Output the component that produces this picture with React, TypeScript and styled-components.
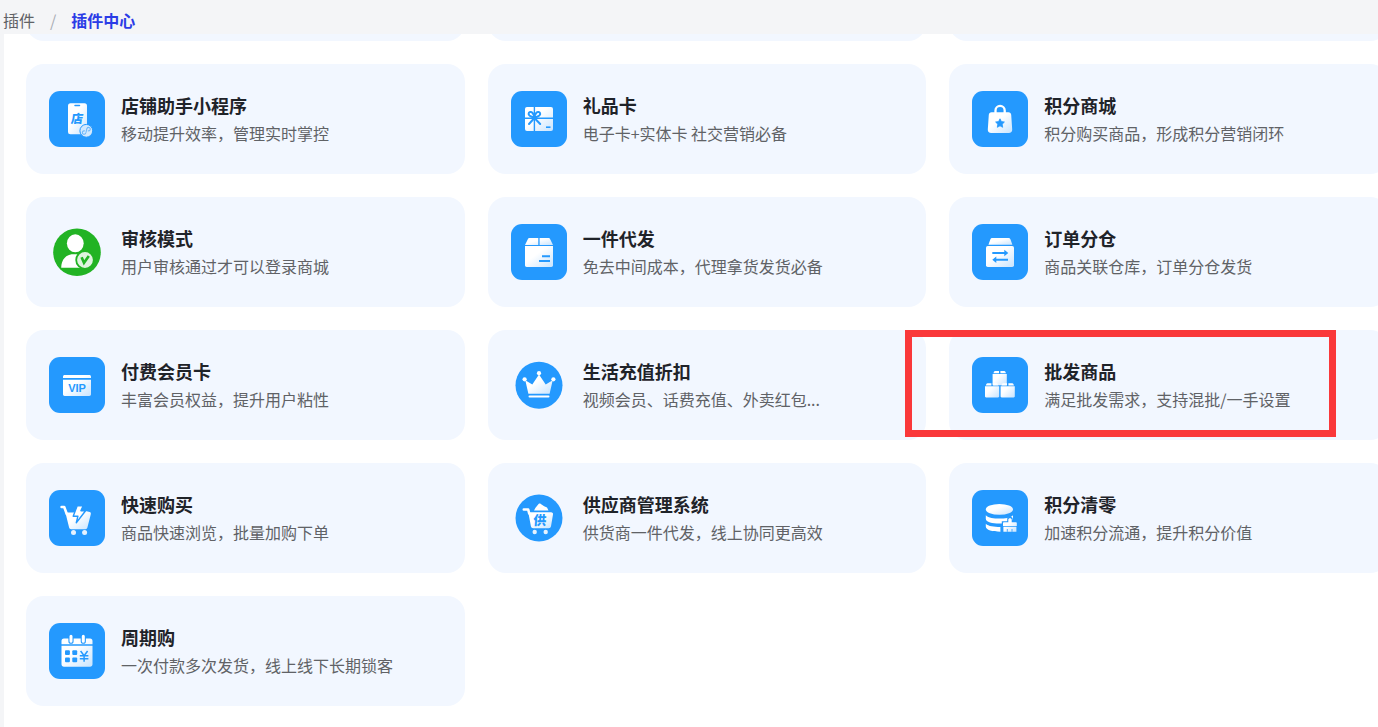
import React from 'react';
import styled, { createGlobalStyle } from 'styled-components';

const GlobalStyle = createGlobalStyle`
  * { box-sizing: border-box; }
  body {
    margin: 0;
    background: #f4f5f7;
    font-family: "Noto Sans CJK SC", "Liberation Sans", sans-serif;
    overflow: hidden;
  }
`;

const BLUE = '#2499fe';

const Page = styled.div`
  display: flex;
  flex-direction: column;
  min-height: 100vh;
  overflow: hidden;
`;

const Breadcrumb = styled.nav`
  display: flex;
  align-items: center;
  gap: 15px;
  height: 34px;
  padding: 6px 3px 0;
  font-size: 16px;
  line-height: 24px;
`;

const Crumb = styled.a<{ $current?: boolean }>`
  color: ${(p) => (p.$current ? '#2b3ce6' : '#606266')};
  font-weight: ${(p) => (p.$current ? 700 : 400)};
  text-decoration: none;
`;

const Separator = styled.span`
  color: #a9adb5;
`;

const Panel = styled.main`
  flex: 1;
  margin-left: 4px;
  padding: 0 0 21px 22px;
  background: #fff;
  overflow: hidden;
`;

const CardGrid = styled.ul`
  display: grid;
  grid-template-columns: repeat(3, 1fr);
  grid-auto-rows: 110px;
  gap: 23px;
  margin: -103px -10px 0 0;
  padding: 0;
  list-style: none;
`;

const Cell = styled.li`
  position: relative;
  display: flex;
`;

const Card = styled.a`
  flex: 1;
  display: flex;
  align-items: center;
  gap: 16px;
  padding: 0 23px;
  border-radius: 18px;
  background: #f2f7ff;
  text-decoration: none;
`;

const Tile = styled.svg`
  flex: none;
  width: 56px;
  height: 56px;
`;

const Copy = styled.div`
  min-width: 0;
  padding-bottom: 1px;
`;

const Title = styled.h3`
  margin: 0;
  color: #1f2329;
  font-size: 18px;
  font-weight: 700;
  line-height: 28px;
`;

const Description = styled.p`
  margin: 0;
  color: #606266;
  font-size: 16px;
  line-height: 28px;
  white-space: nowrap;
`;

const Highlight = styled.div`
  position: absolute;
  top: 0;
  left: -44px;
  width: 431px;
  height: 107px;
  border: 7px solid #fa383a;
  pointer-events: none;
`;

const F = 'url(#sheen)';

const PhoneIcon = (
  <>
    <rect x="19" y="12.3" width="19" height="31" rx="2.5" fill={F} />
    <path d="M26 14.5h4.5" stroke={BLUE} strokeWidth="1.5" strokeLinecap="round" />
    <text x="28" y="31.8" fontSize="12" fontWeight="900" textAnchor="middle" fill={BLUE} transform="skewX(-8) translate(4 0)">店</text>
    <circle cx="37.3" cy="39.8" r="6.4" fill="#d3e9fd" stroke={BLUE} strokeWidth="1" />
    <path d="M36.6 42.2a1.7 1.7 0 1 1-1.2-2.3M38 37.5a1.7 1.7 0 1 1 1.2 2.3M37 41.5l.8-3.8" fill="none" stroke="#6fb9fb" strokeWidth="1.1" strokeLinecap="round" />
  </>
);

const GiftCardIcon = (
  <>
    <rect x="14" y="16" width="28" height="24" rx="2" fill={F} />
    <path d="M14 27.3h28M23.4 16v24" stroke={BLUE} strokeWidth="1.4" />
    <path d="M23.4 27c-2-1.6-5.6-1.3-5.8-4 0-2.2 2.6-2.8 4-1 1.3 1.5 1.8 3.5 1.8 5ZM23.4 27c2-1.6 5.6-1.3 5.8-4 0-2.2-2.6-2.8-4-1-1.3 1.5-1.8 3.5-1.8 5ZM23.4 27l-5.4 6M23.4 27l5.8 6" fill="none" stroke={BLUE} strokeWidth="2" strokeLinecap="round" />
    <path d="M35 36.2h4.5" stroke={BLUE} strokeWidth="1.6" />
  </>
);

const BagIcon = (
  <>
    <path d="M23.5 23v-3.500a4.600 4.600 0 0 1 9.200 0V23" fill="none" stroke="#fff" strokeWidth="2.3" />
    <path d="M19.5 21.3h17c1.6 0 2.5 1 2.7 2.5l1 14.700c.1 2.200-1.200 3.500-3.400 3.500H19.200c-2.200 0-3.500-1.300-3.400-3.500l1-14.700c.2-1.500 1.100-2.500 2.700-2.500Z" fill={F} />
    <path d="m28 27.8 1.400 2.800 3 .4-2.200 2.200.5 3.100-2.700-1.500-2.700 1.500.5-3.100-2.200-2.200 3-.4Z" fill={BLUE} stroke={BLUE} strokeWidth=".8" strokeLinejoin="round" />
  </>
);

const AuditIcon = (
  <>
    <circle cx="28" cy="28.3" r="23.8" fill="#22b324" />
    <ellipse cx="26.3" cy="19.3" rx="8.4" ry="9" fill="#fff" />
    <path d="M12.2 43.8c0-8.300 5-13.500 12-13.500h4c4 0 7 1.500 9 4v9.500Z" fill="#fff" />
    <circle cx="36" cy="36" r="8.8" fill="#dff4df" stroke="#22b324" strokeWidth="1.8" />
    <path d="m32.6 33.200 2.400 5.600 4.800-6.800" fill="none" stroke="#22b324" strokeWidth="2.600" />
  </>
);

const ParcelIcon = (
  <>
    <path d="M18.8 14h8.500v6.900H14l2.700-5.500c.4-.9 1.100-1.400 2.100-1.400ZM28.600 14h8.600c1 0 1.700.5 2.100 1.400L42 20.900H28.600Z" fill={F} />
    <path d="M14 22h28v19.300c0 1-.7 1.700-1.700 1.700H15.700c-1 0-1.700-.7-1.700-1.700Z" fill={F} />
    <path d="M31 32.300h8M28 37h11" stroke={BLUE} strokeWidth="2" />
  </>
);

const WarehouseIcon = (
  <>
    <path d="M20 14h16.600c.8 0 1.400.4 1.800 1.200l2 5.500h-24l2-5.500c.3-.8.9-1.200 1.600-1.200Z" fill={F} />
    <rect x="14" y="22" width="28" height="21" rx="1.8" fill={F} />
    <path d="M20.300 29h14M36 35.800H22" stroke={BLUE} strokeWidth="1.900" />
    <path d="m32.300 25.800 4 3.200-4 3.200ZM24.300 32.600l-4 3.200 4 3.200Z" fill={BLUE} />
  </>
);

const VipIcon = (
  <>
    <path d="M15.7 18h24.600c1 0 1.700.7 1.700 1.700V21H14v-1.300c0-1 .7-1.700 1.700-1.700ZM14 22.800h28v14.500c0 1-.7 1.700-1.700 1.700H15.700c-1 0-1.700-.7-1.700-1.700Z" fill={F} />
    <text x="28" y="34.800" fontSize="11" fontWeight="700" fontFamily="Liberation Sans" textAnchor="middle" fill={BLUE}>VIP</text>
  </>
);

const CrownIcon = (
  <>
    <circle cx="28" cy="28.2" r="23.5" fill={BLUE} />
    <path d="m14.300 23.300 7 4.200L28 17.500l6.700 10 7-4.200-3.100 13.400H17.400Z" fill={F} />
    <g fill="#fff">
      <circle cx="13.6" cy="22.3" r="2.1" />
      <circle cx="28" cy="16.2" r="2.1" />
      <circle cx="42.4" cy="22.3" r="2.1" />
      <rect x="17.5" y="38.4" width="21" height="2.2" rx="1" />
    </g>
  </>
);

const WholesaleIcon = (
  <>
    {[[20.6, 14], [13, 26.2], [28.6, 26.2]].map(([x, y]) => (
      <g key={x} transform={`translate(${x} ${y})`}>
        <path d="M2.600 0h3.800v2.300H.8l.6-1.500C1.600.2 2 0 2.600 0ZM7.800 0h3.800c.6 0 1 .2 1.200.8l.6 1.500H7.800ZM0 3.100h14.200v10c0 .7-.4 1.100-1.100 1.100h-12c-.7 0-1.100-.4-1.100-1.100Z" fill={F} />
      </g>
    ))}
  </>
);

const QuickCartIcon = (
  <>
    <path d="M12.600 17h2.600l2.600 7" fill="none" stroke="#fff" strokeWidth="2.6" strokeLinecap="round" strokeLinejoin="round" />
    <path d="M16.400 22.500h8.200l12-1.500 4 1c1.100.4 1.500 1.200 1.200 2.200l-3.400 13.300c-.3 1.100-1 1.700-2 1.700H22.200c-1.100 0-1.800-.6-2.100-1.700Z" fill={F} />
    <path d="M28.200 15.700h6l-2.300 5h4.700l-9.300 12 1.600-6.500h-4.700Z" fill="#fff" stroke={BLUE} strokeWidth="1.4" strokeLinejoin="round" />
    <circle cx="24.5" cy="42.6" r="2.5" fill="#e5f2ff" />
    <circle cx="35.6" cy="42.6" r="2.5" fill="#e5f2ff" />
  </>
);

const SupplierIcon = (
  <>
    <circle cx="28" cy="28" r="23.5" fill={BLUE} />
    <path d="M12.800 19.500h4.400l1 4" fill="none" stroke="#fff" strokeWidth="2.6" strokeLinecap="round" strokeLinejoin="round" />
    <path d="m23 20.500 1.500-2.700 3.300-4c.6-.5 1.400-.5 2 .1l3.400 2.300 2.800 1.300 1.500 3Z" fill="#fff" />
    <path d="M17.300 22.300H40c1.500 0 2.300.9 2 2.300l-2 11.600c-.3 1.300-1 2-2.300 2H22.200c-1.300 0-2-.7-2.300-2Z" fill={F} />
    <text x="29" y="35" fontSize="13" fontWeight="900" textAnchor="middle" fill={BLUE} transform="skewX(-4) translate(2 0)">供</text>
    <circle cx="23.7" cy="42" r="2.2" fill="#e5f2ff" />
    <circle cx="34.7" cy="42" r="2.2" fill="#e5f2ff" />
  </>
);

const PointsResetIcon = (
  <>
    <ellipse cx="27.4" cy="19.4" rx="13.6" ry="5.4" fill={F} />
    <path d="M13.800 25.200c2.700 2.600 8 3.400 13.600 3.400s10.900-.8 13.600-3.400v4.900l-4.800 1.200-6.700 2.200c-7 .4-15.700-1-15.700-4.800Z" fill="#fff" />
    <path d="M13.800 33.700c2.700 2.600 8 3.200 14.600 3.200v4.900c-8 0-14.600-1.600-14.600-5.200Z" fill="#fff" />
    <path d="M29.800 31.200h5.400V29c0-3 5.600-3 5.600 0v2.200h5V43h-16Z" fill={BLUE} />
    <path d="M31 36v-3c0-.5.3-.8.8-.8h4.500v-2.400c0-2 3.400-2 3.400 0v2.400h4.300c.5 0 .8.3.8.8v3ZM31.400 36.800h13v5h-13Z" fill={F} />
    <path d="M35.300 39v2.800M40 39v2.800" stroke={BLUE} strokeWidth=".8" />
  </>
);

const CalendarIcon = (
  <>
    <path d="M15 15.500h26c1.700 0 2.500 1 2.500 2.500v3.200h-31V18c0-1.500.8-2.500 2.500-2.500ZM12.500 22.800h31v18.400c0 1.500-1 2.500-2.500 2.500H15c-1.500 0-2.500-1-2.500-2.500Z" fill={F} />
    <path d="M22 13.800v4.400M34.300 13.800v4.400" stroke={BLUE} strokeWidth="5.2" strokeLinecap="round" />
    <path d="M22 13.200v5M34.300 13.200v5" stroke="#fff" strokeWidth="3" strokeLinecap="round" />
    {[[16, 27.3], [23.3, 27.3], [16, 34.5], [23.3, 34.5]].map(([x, y]) => (
      <rect key={`${x}-${y}`} x={x} y={y} width="4.9" height="4.7" rx="1" fill={BLUE} />
    ))}
    <path d="m31.600 28 3.500 4.700 3.500-4.700M35.100 32.700v6M30.800 32.700h8.600M30.800 35.700h8.600" fill="none" stroke={BLUE} strokeWidth="1.5" />
  </>
);

interface Plugin {
  title: string;
  description: string;
  icon: React.ReactNode;
  round?: boolean;
  highlighted?: boolean;
}

const plugins: Plugin[] = [
  { title: '店铺助手小程序', description: '移动提升效率，管理实时掌控', icon: PhoneIcon },
  { title: '礼品卡', description: '电子卡+实体卡 社交营销必备', icon: GiftCardIcon },
  { title: '积分商城', description: '积分购买商品，形成积分营销闭环', icon: BagIcon },
  { title: '审核模式', description: '用户审核通过才可以登录商城', icon: AuditIcon, round: true },
  { title: '一件代发', description: '免去中间成本，代理拿货发货必备', icon: ParcelIcon },
  { title: '订单分仓', description: '商品关联仓库，订单分仓发货', icon: WarehouseIcon },
  { title: '付费会员卡', description: '丰富会员权益，提升用户粘性', icon: VipIcon },
  { title: '生活充值折扣', description: '视频会员、话费充值、外卖红包...', icon: CrownIcon, round: true },
  { title: '批发商品', description: '满足批发需求，支持混批/一手设置', icon: WholesaleIcon, highlighted: true },
  { title: '快速购买', description: '商品快速浏览，批量加购下单', icon: QuickCartIcon },
  { title: '供应商管理系统', description: '供货商一件代发，线上协同更高效', icon: SupplierIcon, round: true },
  { title: '积分清零', description: '加速积分流通，提升积分价值', icon: PointsResetIcon },
  { title: '周期购', description: '一次付款多次发货，线上线下长期锁客', icon: CalendarIcon },
];

function PluginCard({ plugin }: { plugin: Plugin }) {
  return (
    <Cell>
      <Card href="#">
        <Tile viewBox="0 0 56 56" aria-hidden="true">
          <defs>
            <linearGradient id="sheen" x1="0" y1="0" x2="1" y2="1">
              <stop offset="0.4" stopColor="#fff" />
              <stop offset="1" stopColor="#c8e4fe" />
            </linearGradient>
          </defs>
          {!plugin.round && <rect width="56" height="56" rx="11" fill={BLUE} />}
          {plugin.icon}
        </Tile>
        <Copy>
          <Title>{plugin.title}</Title>
          <Description>{plugin.description}</Description>
        </Copy>
      </Card>
      {plugin.highlighted && <Highlight />}
    </Cell>
  );
}

export default function App() {
  return (
    <>
      <GlobalStyle />
      <Page>
        <Breadcrumb>
          <Crumb href="#">插件</Crumb>
          <Separator>/</Separator>
          <Crumb href="#" $current aria-current="page">插件中心</Crumb>
        </Breadcrumb>
        <Panel>
          <CardGrid>
            {/* the row above, scrolled almost out of view */}
            {[0, 1, 2].map((n) => (
              <Cell key={n} aria-hidden="true">
                <Card />
              </Cell>
            ))}
            {plugins.map((plugin) => (
              <PluginCard key={plugin.title} plugin={plugin} />
            ))}
          </CardGrid>
        </Panel>
      </Page>
    </>
  );
}
